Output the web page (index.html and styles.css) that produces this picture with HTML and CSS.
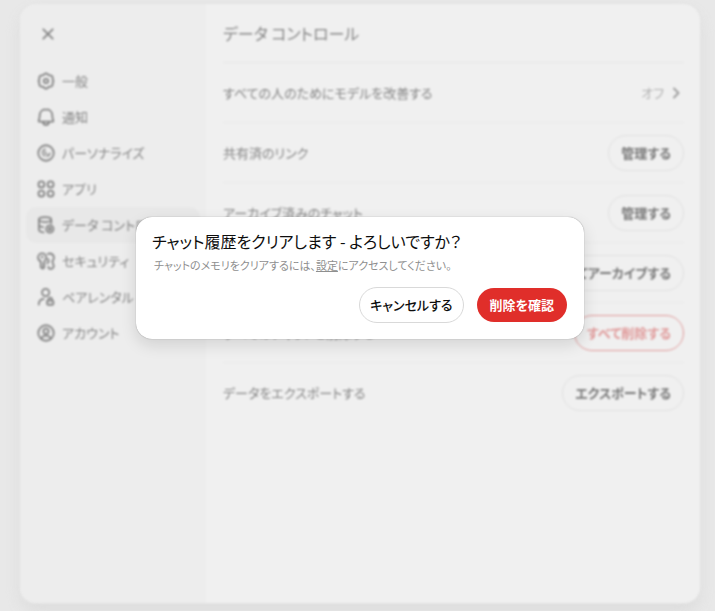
FILE: index.html
```html
<!DOCTYPE html>
<html lang="ja">
<head>
<meta charset="utf-8">
<meta name="viewport" content="width=device-width, initial-scale=1">
<title>データ コントロール</title>
<link rel="stylesheet" href="styles.css">
</head>
<body>
<div class="backdrop">
  <main class="settings">
    <nav class="sidebar" aria-label="設定">
      <button class="close" type="button" aria-label="閉じる">
        <svg class="icon" viewBox="0 0 20 20"><path d="M4.800 4.800l10.400 10.400M15.200 4.800L4.800 15.200"/></svg>
      </button>
      <a class="item" href="#general">
        <svg class="icon" viewBox="0 0 20 20"><path d="M8.400 2.200Q10 .8 11.600 2.200L13 3.500L15.600 3.900Q17.500 4.400 17.500 6.300L17.400 8.200L18.300 10L17.400 11.800L17.500 13.700Q17.500 15.600 15.600 16.100L13 16.500L11.600 17.800Q10 19.200 8.400 17.800L7 16.500L4.400 16.100Q2.500 15.600 2.500 13.700L2.600 11.800L1.700 10L2.600 8.200L2.500 6.300Q2.500 4.400 4.400 3.900L7 3.500Z"/><circle cx="10" cy="10" r="2.400"/></svg>
        <span>一般</span>
      </a>
      <a class="item" href="#notifications">
        <svg class="icon" viewBox="0 0 20 20"><path d="M10 1.400c-4.200 0-7 3-7 7 0 2.600-.5 4-1 5.200-.4.900 0 1.600.8 1.600h14.400c.8 0 1.200-.7.800-1.600-.5-1.200-1-2.600-1-5.200 0-4-2.800-7-7-7zM6.500 15.500c.4 2 1.700 3.200 3.500 3.200s3.100-1.200 3.500-3.200"/></svg>
        <span>通知</span>
      </a>
      <a class="item" href="#personalization">
        <svg class="icon" viewBox="0 0 20 20"><circle cx="10" cy="10" r="8.600"/><path class="fine" d="M9.200 5.800C7 6.600 5.900 8.600 6.400 10.600c.3 1.200 1 2 2 2.600M9.300 8.400c-.3 1.800.3 2.700 1.500 2.900M11 13.400c1.900-.2 3-1.300 3.200-3.200"/></svg>
        <span>パーソナライズ</span>
      </a>
      <a class="item" href="#apps">
        <svg class="icon" viewBox="0 0 20 20"><circle cx="4.900" cy="4.900" r="3.300"/><circle cx="15.100" cy="4.900" r="3.300"/><circle cx="4.900" cy="15.100" r="3.300"/><circle cx="15.100" cy="15.100" r="3.300"/></svg>
        <span>アプリ</span>
      </a>
      <a class="item current" href="#data" aria-current="page">
        <svg class="icon" viewBox="0 0 20 20"><ellipse cx="9" cy="4" rx="6.800" ry="2.700"/><path d="M2.200 4v11.400c0 1.500 2.200 2.600 5 2.800M2.200 9.700c0 1.300 1.800 2.300 4.500 2.600M15.800 4v4"/><circle cx="14.300" cy="14.500" r="4"/><circle cx="14.300" cy="14.500" r="1.200"/></svg>
        <span>データ コントロール</span>
      </a>
      <a class="item" href="#security">
        <svg class="icon" viewBox="0 0 20 20"><path d="M4.200 10.500C2.200 9.700 1.200 8 1.200 6.200c0-2.600 2-4.600 4.500-4.600s4.500 2 4.500 4.600c0 1.800-.8 3.300-2 4v2l-1.100 1.300 1.100 1.400-1.100 1.300 1 1-1.900 1.300-2-1.600zM12 2.200c3.500-1.600 6.800.7 6.800 4 0 1.800-.8 3.200-1.800 4l1.600 5.300c.3 1.200-1.600 3.300-3 3.300-1.600 0-2.700-1-3-2.200M12.300 7.600l.7 3-1.500 2"/><circle cx="5.700" cy="5.600" r=".5"/></svg>
        <span>セキュリティ</span>
      </a>
      <a class="item" href="#parental">
        <svg class="icon" viewBox="0 0 20 20"><circle cx="9.600" cy="5" r="4"/><path d="M2 18.400c0-3.900 2.200-6 5.500-6.300M12.700 14v-1.300c0-2.700 4-2.700 4 0V14"/><rect x="11.200" y="14" width="7" height="4.600" rx="1"/></svg>
        <span>ペアレンタル コントロール</span>
      </a>
      <a class="item" href="#account">
        <svg class="icon" viewBox="0 0 20 20"><circle cx="10" cy="10" r="8.600"/><circle cx="10" cy="8" r="2.900"/><path d="M4.600 16.300c.8-2.200 2.800-3.400 5.400-3.400s4.600 1.200 5.400 3.400"/></svg>
        <span>アカウント</span>
      </a>
    </nav>
    <section class="content">
      <h1 class="heading">データ コントロール</h1>
      <div class="row">
        <span>すべての人のためにモデルを改善する</span>
        <button class="value" type="button">オフ
          <svg class="chevron" viewBox="0 0 16 16"><path d="M6 3.500l4.500 4.500L6 12.500"/></svg>
        </button>
      </div>
      <div class="row"><span>共有済のリンク</span><button class="pill" type="button">管理する</button></div>
      <div class="row"><span>アーカイブ済みのチャット</span><button class="pill" type="button">管理する</button></div>
      <div class="row"><span>すべてのチャットをアーカイブする</span><button class="pill" type="button">すべてアーカイブする</button></div>
      <div class="row"><span>すべてのチャットを削除する</span><button class="pill danger" type="button">すべて削除する</button></div>
      <div class="row"><span>データをエクスポートする</span><button class="pill" type="button">エクスポートする</button></div>
    </section>
  </main>
</div>
<div class="overlay">
  <div class="dialog" role="alertdialog" aria-modal="true" aria-labelledby="dialog-title" aria-describedby="dialog-text">
    <h2 class="title" id="dialog-title">チャット履歴をクリアします - よろしいですか？</h2>
    <p class="text" id="dialog-text">チャットのメモリをクリアするには、<a href="#settings">設定</a>にアクセスしてください。</p>
    <div class="actions">
      <button class="action" type="button">キャンセルする</button>
      <button class="action confirm" type="button">削除を確認</button>
    </div>
  </div>
</div>
</body>
</html>
```
FILE: styles.css
```css
* {
  box-sizing: border-box;
}

body {
  margin: 0;
  background: #e8e8e8;
  color: #858585;
  font-family: "Noto Sans CJK JP", sans-serif;
  font-feature-settings: "palt";
  font-size: 13px;
  line-height: 20px;
}

button {
  font: inherit;
  font-feature-settings: inherit;
  color: inherit;
  background: none;
  border: 0;
  padding: 0;
  cursor: pointer;
}

.backdrop {
  display: grid;
  min-height: 100vh;
  padding: 4px 15px 8px 20px;
  filter: blur(1px);
}

.settings {
  display: grid;
  grid-template-columns: 186px minmax(0, 1fr);
  overflow: hidden;
  border-radius: 16px;
  background: #f0f0f0;
  box-shadow: 0 0 0 1px #e2e2e2, 0 8px 16px #dcdcdc;
}

.sidebar {
  display: flex;
  flex-direction: column;
  padding: 12px 6px;
  background: #ededed;
}

.close {
  display: grid;
  place-items: center;
  width: 36px;
  height: 36px;
  margin: 0 4px 11px;
}

.icon,
.chevron {
  flex: none;
  width: 18px;
  height: 18px;
  fill: none;
  stroke: currentColor;
  stroke-width: 2;
  stroke-linecap: round;
  stroke-linejoin: round;
}

.fine {
  stroke-width: 1.5;
}

.item {
  display: flex;
  align-items: center;
  gap: 7px;
  height: 36px;
  padding: 0 11px;
  border-radius: 10px;
  color: inherit;
  text-decoration: none;
  white-space: nowrap;
  overflow: hidden;
}

.current {
  background: #e8e8e8;
}

.content {
  padding: 0 16px 0 17px;
}

.heading {
  margin: 0;
  padding: 15px 0;
  border-bottom: 1px solid #e6e6e6;
  font-size: 16px;
  font-weight: 400;
  line-height: 28px;
}

.row {
  display: flex;
  align-items: center;
  justify-content: space-between;
  height: 60px;
  border-bottom: 1px solid #e9e9e9;
}

.row:last-child {
  border-bottom: 0;
}

.value {
  display: flex;
  align-items: center;
  gap: 4px;
  color: #b0b0b0;
}

.chevron {
  width: 16px;
  height: 16px;
  color: #a0a0a0;
}

.pill {
  height: 36px;
  padding: 0 12px;
  border: 1px solid #e0e0e0;
  border-radius: 18px;
  color: #777;
  font-weight: 700;
  white-space: nowrap;
}

.danger {
  border-color: #e09a9a;
  color: #e09a9a;
}

.overlay {
  position: absolute;
  inset: 217px 15px auto 20px;
  display: flex;
  justify-content: center;
}

.dialog {
  width: 100%;
  max-width: 448px;
  padding: 11px 17px 16px 16px;
  border-radius: 16px;
  background: #fff;
  box-shadow: 0 0 1px #777, 0 6px 16px rgba(0, 0, 0, 0.12);
}

.title {
  margin: 0;
  color: #0d0d0d;
  font-size: 16px;
  font-weight: 400;
  line-height: 26px;
}

.text {
  margin: 0;
  padding: 0 2px;
  color: #8f8f8f;
  font-size: 11px;
  line-height: 22px;
}

.text a {
  color: inherit;
}

.actions {
  display: flex;
  align-items: center;
  justify-content: flex-end;
  gap: 13px;
  margin-top: 11px;
}

.action {
  height: 36px;
  padding: 0 10px;
  border: 1px solid #d9d9d9;
  border-radius: 18px;
  color: #0d0d0d;
  font-weight: 500;
}

.confirm {
  height: 34px;
  padding: 0 13px;
  border: 0;
  background: #e02e2a;
  color: #fff;
  font-weight: 700;
}
```
